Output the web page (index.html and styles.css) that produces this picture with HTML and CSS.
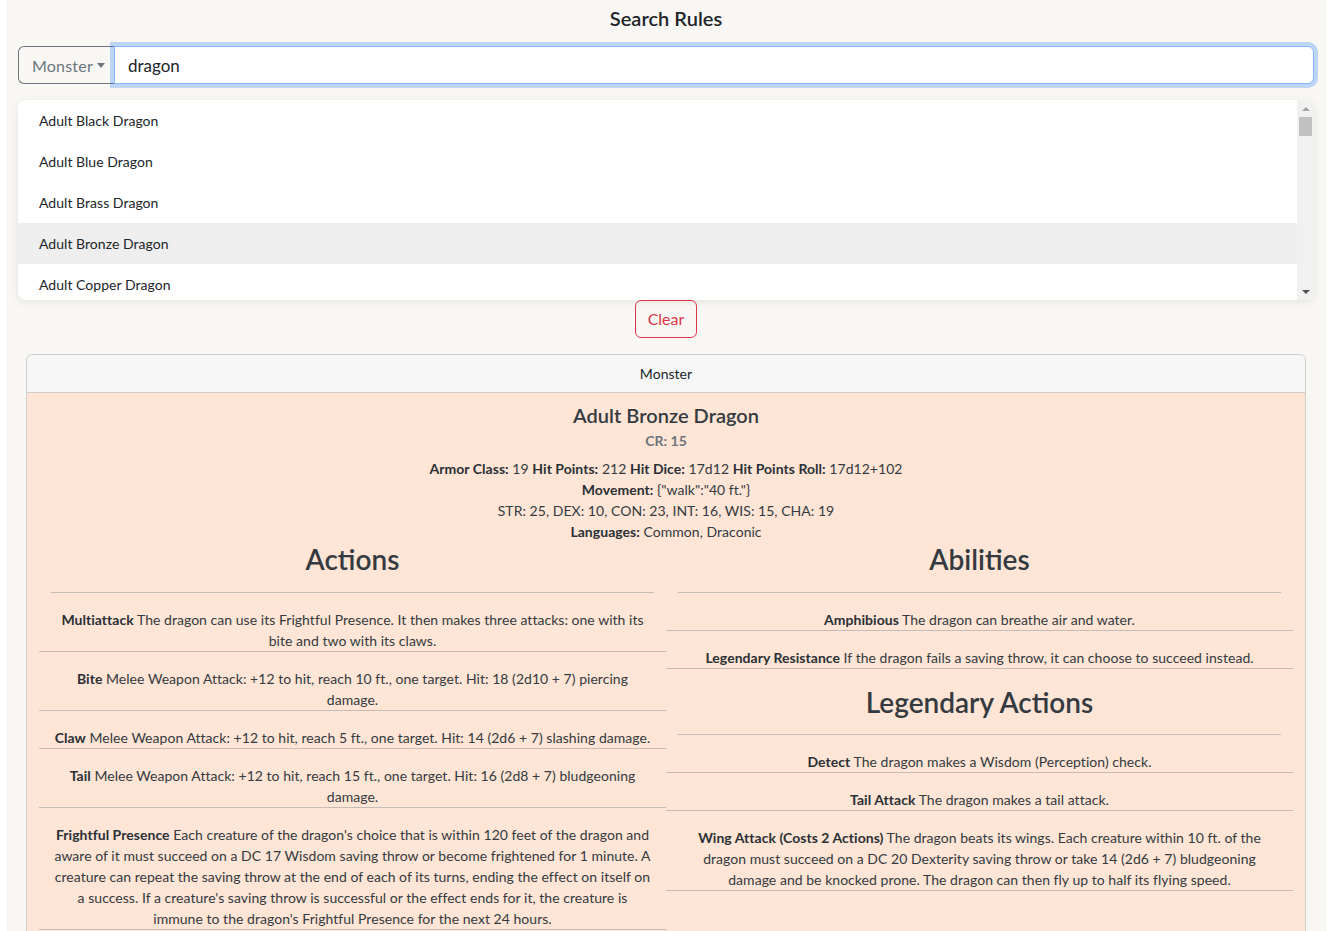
FILE: index.html
```html
<!DOCTYPE html>
<html lang="en">
<head>
<meta charset="utf-8">
<title>Search Rules</title>
<link rel="stylesheet" href="styles.css">
</head>
<body>
<div class="page">
  <h1 class="title">Search Rules</h1>
  <div class="input-group">
    <button class="type-btn">Monster <span class="caret"></span></button>
    <input class="query" type="text" value="dragon">
  </div>
  <div class="results">
    <ul class="result-list">
      <li>Adult Black Dragon</li>
      <li>Adult Blue Dragon</li>
      <li>Adult Brass Dragon</li>
      <li class="hover">Adult Bronze Dragon</li>
      <li>Adult Copper Dragon</li>
    </ul>
    <div class="scrollbar">
      <div class="sb-btn"><span class="sb-up"></span></div>
      <div class="sb-thumb"></div>
      <div class="sb-space"></div>
      <div class="sb-btn"><span class="sb-down"></span></div>
    </div>
  </div>
  <div class="clear-row"><button class="clear-btn">Clear</button></div>

  <div class="card">
    <div class="card-header">Monster</div>
    <div class="card-body">
      <h2 class="monster-name">Adult Bronze Dragon</h2>
      <div class="cr">CR: 15</div>
      <div class="stats">
        <p><strong>Armor Class:</strong> 19 <strong>Hit Points:</strong> 212 <strong>Hit Dice:</strong> 17d12 <strong>Hit Points Roll:</strong> 17d12+102</p>
        <p><strong>Movement:</strong> {"walk":"40 ft."}</p>
        <p>STR: 25, DEX: 10, CON: 23, INT: 16, WIS: 15, CHA: 19</p>
        <p><strong>Languages:</strong> Common, Draconic</p>
      </div>
      <div class="columns">
        <div class="col">
          <h3 class="section-title">Actions</h3>
          <hr class="rule">
          <div class="entry"><strong>Multiattack</strong> The dragon can use its Frightful Presence. It then makes three attacks: one with its bite and two with its claws.</div>
          <div class="entry"><strong>Bite</strong> Melee Weapon Attack: +12 to hit, reach 10 ft., one target. Hit: 18 (2d10 + 7) piercing damage.</div>
          <div class="entry"><strong>Claw</strong> Melee Weapon Attack: +12 to hit, reach 5 ft., one target. Hit: 14 (2d6 + 7) slashing damage.</div>
          <div class="entry"><strong>Tail</strong> Melee Weapon Attack: +12 to hit, reach 15 ft., one target. Hit: 16 (2d8 + 7) bludgeoning damage.</div>
          <div class="entry"><strong>Frightful Presence</strong> Each creature of the dragon's choice that is within 120 feet of the dragon and aware of it must succeed on a DC 17 Wisdom saving throw or become frightened for 1 minute. A creature can repeat the saving throw at the end of each of its turns, ending the effect on itself on a success. If a creature's saving throw is successful or the effect ends for it, the creature is immune to the dragon's Frightful Presence for the next 24 hours.</div>
          <div class="entry"><strong>Breath Weapons (Recharge 5-6)</strong> The dragon uses one of the following breath weapons.</div>
        </div>
        <div class="col">
          <h3 class="section-title">Abilities</h3>
          <hr class="rule">
          <div class="entry"><strong>Amphibious</strong> The dragon can breathe air and water.</div>
          <div class="entry"><strong>Legendary Resistance</strong> If the dragon fails a saving throw, it can choose to succeed instead.</div>
          <h3 class="section-title spaced">Legendary Actions</h3>
          <hr class="rule">
          <div class="entry"><strong>Detect</strong> The dragon makes a Wisdom (Perception) check.</div>
          <div class="entry"><strong>Tail Attack</strong> The dragon makes a tail attack.</div>
          <div class="entry"><strong>Wing Attack (Costs 2 Actions)</strong> The dragon beats its wings. Each creature within 10 ft. of the dragon must succeed on a DC 20 Dexterity saving throw or take 14 (2d6 + 7) bludgeoning damage and be knocked prone. The dragon can then fly up to half its flying speed.</div>
        </div>
      </div>
    </div>
  </div>
</div>
</body>
</html>
```

FILE: styles.css
```css
* { box-sizing: border-box; }

html, body {
  margin: 0;
  padding: 0;
  background: #ffffff;
}

body {
  font-family: Lato, "Liberation Sans", sans-serif;
  color: #343a40;
  font-size: 14px;
  line-height: 21px;
  letter-spacing: 0.035px;
}

.page {
  margin: 0 18px 0 6px;
  padding: 7px 12px 40px;
  background: #f8f7f4;
  min-height: 931px;
}

.title {
  margin: 0;
  text-align: center;
  font-size: 20px;
  line-height: 23px;
  font-weight: 600;
  color: #212529;
}

.input-group {
  display: flex;
  margin-top: 16px;
  height: 38px;
}

.type-btn {
  flex: 0 0 96px;
  width: 96px;
  min-width: 0;
  display: flex;
  align-items: center;
  gap: 4px;
  padding: 0 0 0 13px;
  border: 1px solid #6c757d;
  border-right: none;
  border-radius: 6px 0 0 6px;
  background: transparent;
  color: #6c757d;
  font-family: inherit;
  font-size: 16px;
  letter-spacing: 0.2px;
  white-space: nowrap;
}

.caret {
  width: 0;
  height: 0;
  border-top: 5px solid #6c757d;
  border-left: 4px solid transparent;
  border-right: 4px solid transparent;
  margin-top: 1px;
}

.query {
  flex: 1;
  min-width: 0;
  border: 1px solid #86b7fe;
  border-radius: 0 6px 6px 0;
  box-shadow: 0 0 0 4px rgba(13, 110, 253, 0.25);
  padding: 0 13px;
  font-family: inherit;
  font-size: 17px;
  color: #212529;
  background: #fff;
  outline: none;
}

.results {
  display: flex;
  margin-top: 16px;
  height: 200px;
  background: #fff;
  border-radius: 8px;
  overflow: hidden;
  box-shadow: 0 2px 8px rgba(0, 0, 0, 0.08);
}

.result-list {
  flex: 1;
  list-style: none;
  margin: 0;
  padding: 0;
  overflow: hidden;
}

.result-list li {
  height: 41px;
  padding: 10px 21px;
  font-size: 14px;
  line-height: 21px;
  color: #212529;
}

.result-list li.hover {
  background: #eeeeee;
}

.scrollbar {
  flex: 0 0 17px;
  display: flex;
  flex-direction: column;
  background: #f1f1f1;
}

.sb-btn {
  height: 17px;
  display: flex;
  align-items: center;
  justify-content: center;
}

.sb-up {
  width: 0;
  height: 0;
  border-bottom: 4px solid #a3a3a3;
  border-left: 4px solid transparent;
  border-right: 4px solid transparent;
}

.sb-down {
  width: 0;
  height: 0;
  border-top: 4px solid #505050;
  border-left: 4px solid transparent;
  border-right: 4px solid transparent;
}

.sb-thumb {
  height: 19px;
  margin: 0 2px;
  background: #c1c1c1;
}

.sb-space { flex: 1; }

.clear-row {
  display: flex;
  justify-content: center;
}

.clear-btn {
  height: 38px;
  padding: 0 12px 1px;
  border: 1px solid #dc3545;
  border-radius: 6px;
  background: transparent;
  color: #dc3545;
  font-family: inherit;
  font-size: 16px;
}

.card {
  margin: 16px 8px 0;
  border: 1px solid #cfcfcf;
  border-radius: 6px;
  overflow: hidden;
  background: #fee5d5;
}

.card-header {
  padding: 8px 16px;
  background: #f6f6f6;
  border-bottom: 1px solid #cfcfcf;
  text-align: center;
  font-size: 14px;
  line-height: 21px;
  color: #212529;
}

.card-body {
  padding: 12px;
  text-align: center;
}

.monster-name {
  margin: -2px 0 3px;
  font-size: 20px;
  line-height: 24px;
  font-weight: 600;
  color: #343a40;
}

.cr {
  font-weight: 700;
  color: #6c757d;
  margin-bottom: 7px;
}

.stats p { margin: 0; }

strong { font-weight: 700; color: #2b3035; }

.columns {
  display: grid;
  grid-template-columns: 1fr 1fr;
}

.section-title {
  margin: 1px 0 0;
  font-size: 28px;
  line-height: 33.6px;
  font-weight: 600;
  color: #343a40;
  letter-spacing: 0;
}

.section-title.spaced { margin-top: 17px; }

.rule {
  margin: 15px 12px 0;
  border: 0;
  border-top: 1px solid #c5bcb5;
  height: 0;
}

.entry {
  padding: 16px 12px 0;
  border-bottom: 1px solid #c5bcb5;
}
```
